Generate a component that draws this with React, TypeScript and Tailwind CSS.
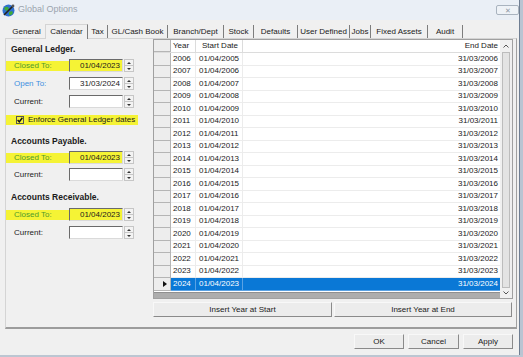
import React from "react";

const years = Array.from({ length: 19 }, (_, i) => 2006 + i);

const tabs = [
  { name: "General", w: "w-[37px]", sep: false },
  { name: "Calendar", w: "w-[43px]", active: true },
  { name: "Tax", w: "w-[20px]", sep: true },
  { name: "GL/Cash Book", w: "w-[60px]", sep: true },
  { name: "Branch/Dept", w: "w-[56px]", sep: true },
  { name: "Stock", w: "w-[30px]", sep: true },
  { name: "Defaults", w: "w-[44px]", sep: true },
  { name: "User Defined", w: "w-[52px]", sep: true },
  { name: "Jobs", w: "w-[21px]", sep: true },
  { name: "Fixed Assets", w: "w-[57px]", sep: true },
  { name: "Audit", w: "w-[35px]", sep: true },
];

function Spinner() {
  return (
    <div className="ml-[1px] flex h-[13px] w-[10px] flex-col">
      <div className="flex h-[7px] items-center justify-center border border-[#c6c6c6] bg-[#f3f3f3]">
        <svg width="4" height="2" viewBox="0 0 4 2">
          <path d="M0 2 L2 0 L4 2Z" fill="#333" />
        </svg>
      </div>
      <div className="flex h-[6px] items-center justify-center border border-t-0 border-[#c6c6c6] bg-[#f3f3f3]">
        <svg width="4" height="2" viewBox="0 0 4 2">
          <path d="M0 0 L2 2 L4 0Z" fill="#333" />
        </svg>
      </div>
    </div>
  );
}

function DateRow({
  label,
  value,
  hl,
  color,
  mt,
}: {
  label: string;
  value?: string;
  hl?: boolean;
  color?: string;
  mt: string;
}) {
  return (
    <div className={`flex h-[13px] items-center ${mt}`}>
      <div className={`flex h-[10px] w-[63px] items-center pl-[8px] ${hl ? "bg-[#f5f335]" : ""}`}>
        <span className={color ?? "text-[#222]"}>{label}</span>
      </div>
      <div
        className={`flex h-[13px] w-[54px] items-center justify-end border border-t-[#6a6a6a] border-l-[#6a6a6a] border-r-[#dadada] border-b-[#dadada] pr-[2px] ${
          hl ? "bg-[#f5f335]" : "bg-white"
        }`}
      >
        {value}
      </div>
      <Spinner />
    </div>
  );
}

function Heading({ children, mt }: { children: React.ReactNode; mt: string }) {
  return <div className={`h-[11px] pl-[5px] text-[8.5px] leading-[11px] font-bold text-[#1a1a1a] ${mt}`}>{children}</div>;
}

function Btn({ children, w }: { children: React.ReactNode; w: string }) {
  return (
    <div
      className={`flex h-[15px] items-center justify-center border border-t-[#f8f8f8] border-l-[#f8f8f8] border-r-[#8a8a8a] border-b-[#8a8a8a] bg-[#ececec] text-[#1a1a1a] ${w}`}
    >
      {children}
    </div>
  );
}

function GlobeIcon() {
  return (
    <svg width="13" height="13" viewBox="0 0 13 13">
      <circle cx="6.5" cy="6.5" r="6" fill="#2d6fd1" />
      <path d="M2 4 Q4 2 6 3 L7 5 L5 7 L3 6Z" fill="#3caa3c" />
      <path d="M7 8 L10 7 L11 9 Q9 12 7 11Z" fill="#3caa3c" />
      <path d="M2 11 L11 2" stroke="#222" strokeWidth="1.6" />
      <circle cx="11" cy="2" r="1.4" fill="#555" />
    </svg>
  );
}

export default function App() {
  return (
    <div className="flex h-[357px] w-[523px] flex-col overflow-hidden bg-[#f0f0f0] font-['Liberation_Sans',Arial,sans-serif] text-[8px] text-[#1a1a1a]">
      <div className="flex h-[355px]">
        <div className="flex w-[519px] flex-col">
          {/* title bar */}
          <div className="flex h-[20px] items-center bg-[#eaeff6] pl-[2px]">
            <GlobeIcon />
            <span className="ml-[3px] text-[9px] text-[#9ba4ae]">Global Options</span>
            <div className="ml-auto flex h-[10px] w-[23px] items-center justify-center rounded-[2px] border border-[#a9b3bf] bg-[#eef2f7] text-[7px] leading-none text-[#8e98a4]">
              ✕
            </div>
          </div>

          {/* tabs */}
          <div className="flex h-[18px] items-end pl-[8px]">
            {tabs.map((t) =>
              t.active ? (
                <div
                  key={t.name}
                  className={`relative z-10 -mb-[1px] flex h-[15px] items-center justify-center border border-b-0 border-t-[#d4d4d4] border-l-[#d4d4d4] border-r-[#7d7d7d] bg-[#f0f0f0] ${t.w}`}
                >
                  {t.name}
                </div>
              ) : (
                <div key={t.name} className={`flex h-[13px] items-center justify-center ${t.sep ? "border-r border-[#7d7d7d]" : ""} ${t.w}`}>
                  {t.name}
                </div>
              )
            )}
          </div>

          {/* panel */}
          <div className="ml-[5px] flex h-[291px] w-[512px] border border-b-2 border-t-[#d4d4d4] border-l-[#d4d4d4] border-r-[#a0a0a0] border-b-[#9c9c9c]">
            {/* left column */}
            <div className="flex w-[147px] flex-col">
              <Heading mt="mt-[5px]">General Ledger.</Heading>
              <DateRow label="Closed To:" value="01/04/2023" hl color="text-[#4e9a2c]" mt="mt-[4px]" />
              <DateRow label="Open To:" value="31/03/2024" color="text-[#3d8fe0]" mt="mt-[5px]" />
              <DateRow label="Current:" mt="mt-[5px]" />
              <div className="mt-[7px] flex h-[10px] w-[132px] items-center bg-[#f5f335] pl-[10px]">
                <div className="flex h-[8px] w-[8px] items-center justify-center border border-[#555] bg-[#f5f335]">
                  <svg width="6" height="6" viewBox="0 0 6 6">
                    <path d="M0.6 3 L2.3 4.8 L5.4 0.8" stroke="#111" strokeWidth="1.4" fill="none" />
                  </svg>
                </div>
                <span className="ml-[4px]">Enforce General Ledger dates</span>
              </div>
              <Heading mt="mt-[11px]">Accounts Payable.</Heading>
              <DateRow label="Closed To:" value="01/04/2023" hl color="text-[#4e9a2c]" mt="mt-[4px]" />
              <DateRow label="Current:" mt="mt-[4px]" />
              <Heading mt="mt-[11px]">Accounts Receivable.</Heading>
              <DateRow label="Closed To:" value="01/04/2023" hl color="text-[#4e9a2c]" mt="mt-[5px]" />
              <DateRow label="Current:" mt="mt-[5px]" />
            </div>

            {/* right column */}
            <div className="flex w-[360px] flex-col">
              <div className="flex h-[260px] border border-[#a0a0a0] bg-white">
                <div className="flex w-[346px] flex-col">
                  <div className="flex h-[13px] border-b border-[#dcdcdc]">
                    <div className="w-[17px] border-r border-b border-[#b5b5b5] bg-[#ededed]" />
                    <div className="flex w-[25px] items-center border-r border-[#dcdcdc] pl-[2px]">Year</div>
                    <div className="flex w-[47px] items-center justify-end border-r border-[#dcdcdc] pr-[4px]">Start Date</div>
                    <div className="flex flex-1 items-center justify-end pr-[2px]">End Date</div>
                  </div>
                  {years.map((y, i) => {
                    const sel = i === years.length - 1;
                    return (
                      <div key={y} className={`flex h-[12.5px] ${sel ? "bg-[#0a78d6] text-white" : ""}`}>
                        <div className="flex w-[17px] items-center justify-end border-r border-b border-[#b5b5b5] bg-[#ededed] pr-[3px] text-[#111]">
                          {sel && (
                            <svg width="4" height="6" viewBox="0 0 4 6">
                              <path d="M0 0 L4 3 L0 6Z" fill="#111" />
                            </svg>
                          )}
                        </div>
                        <div className={`flex w-[25px] items-center border-r border-b pl-[2px] ${sel ? "border-[#5aa2e4]" : "border-[#ececec]"}`}>{y}</div>
                        <div className={`flex w-[47px] items-center border-r border-b pl-[3px] ${sel ? "border-[#5aa2e4]" : "border-[#ececec]"}`}>
                          01/04/{y - 1}
                        </div>
                        <div className={`flex flex-1 items-center justify-end border-b pr-[2px] ${sel ? "border-[#5aa2e4]" : "border-[#ececec]"}`}>
                          31/03/{y}
                        </div>
                      </div>
                    );
                  })}
                  <div className="mt-[1px] h-[6px] border-t border-[#8f8f8f] bg-[#adadad]" />
                </div>
                {/* vertical scrollbar */}
                <div className="flex w-[12px] flex-col bg-[#f0f0f0]">
                  <div className="flex h-[12px] items-center justify-center">
                    <svg width="6" height="4" viewBox="0 0 6 4">
                      <path d="M0.5 3.5 L3 1 L5.5 3.5" stroke="#555" strokeWidth="1" fill="none" />
                    </svg>
                  </div>
                  <div className="mx-[2px] flex-1 border border-[#bcbcbc] bg-[#e3e3e3]" />
                  <div className="flex h-[10px] items-center justify-center">
                    <svg width="6" height="4" viewBox="0 0 6 4">
                      <path d="M0.5 0.5 L3 3 L5.5 0.5" stroke="#555" strokeWidth="1" fill="none" />
                    </svg>
                  </div>
                </div>
              </div>
              <div className="mt-[3px] flex gap-[2px]">
                <Btn w="w-[179px]">Insert Year at Start</Btn>
                <Btn w="w-[178px]">Insert Year at End</Btn>
              </div>
            </div>
          </div>

          {/* dialog buttons */}
          <div className="mt-[5px] flex justify-end gap-[4px] pr-[6px]">
            <Btn w="w-[50px]">OK</Btn>
            <Btn w="w-[51px]">Cancel</Btn>
            <Btn w="w-[50px]">Apply</Btn>
          </div>
        </div>
        <div className="w-[4px] border-l border-[#6f7e92] bg-[#b9c4d2]" />
      </div>
      <div className="h-[2px] bg-[#bcc6d2]" />
    </div>
  );
}
